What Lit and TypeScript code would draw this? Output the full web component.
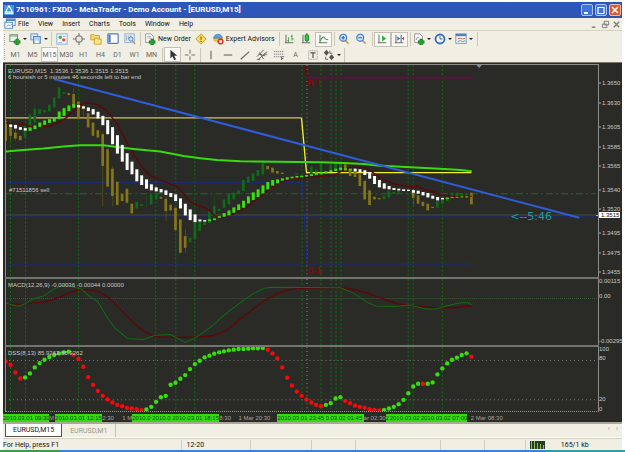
import { LitElement, html, svg, css } from "lit";
import { customElement, property } from "lit/decorators.js";

/* Plot geometry: three plot units per screen pixel at the default size. */
const LEFT = 18;
const RIGHT = 1791;
const WIDTH = RIGHT - LEFT;
const MAIN = { top: 198, bottom: 831 };
const MACD = { top: 837, bottom: 1035 };
const DSS = { top: 1041, bottom: 1233 };
const barX = (i: number) => 17 + i * 14.53;
const SIGNALS = [31, 77, 235, 467, 526, 583, 904, 961, 991, 1006, 1021, 1222, 1237, 1324];
const SESSION = 919;
/* Centre of the screen pixel that holds a plot unit, so hairlines stay sharp. */
const snap = (v: number) => Math.floor(v / 3) * 3 + 1.5;

type Bar = [number, number, number, string];

/* Bars: index, top, bottom, kind. */
const smooth: Bar[] = [
  [1, 376, 383, "w"], [2, 377, 388, "w"], [3, 384, 392, "w"], [4, 387, 394, "w"], [5, 385, 395, "g"],
  [6, 379, 390, "g"], [7, 370, 383, "g"], [8, 364, 377, "g"], [9, 360, 371, "g"], [10, 356, 367, "g"],
  [11, 337, 360, "g"], [12, 327, 350, "g"], [13, 319, 336, "g"], [14, 315, 326, "g"], [15, 318, 325, "w"],
  [16, 322, 328, "w"], [17, 325, 336, "w"], [18, 330, 346, "w"], [19, 338, 358, "w"], [20, 350, 378, "w"],
  [21, 363, 405, "w"], [22, 384, 435, "w"], [23, 408, 463, "w"], [24, 437, 487, "w"], [25, 462, 512, "w"],
  [26, 487, 525, "w"], [27, 510, 546, "w"], [28, 528, 557, "w"], [29, 540, 568, "w"], [30, 555, 573, "w"],
  [31, 564, 576, "w"], [32, 569, 579, "w"], [33, 573, 587, "w"], [34, 581, 593, "w"], [35, 585, 605, "w"],
  [36, 597, 627, "w"], [37, 613, 648, "w"], [38, 630, 662, "w"], [39, 645, 668, "w"], [40, 660, 666, "w"],
  [41, 662, 666, "w"], [42, 660, 665, "g"], [43, 657, 662, "g"], [44, 650, 655, "g"], [45, 641, 652, "g"],
  [46, 633, 648, "g"], [47, 624, 640, "g"], [48, 615, 632, "g"], [49, 604, 625, "g"], [50, 591, 612, "g"],
  [51, 579, 602, "g"], [52, 570, 593, "g"], [53, 558, 582, "g"], [54, 548, 570, "g"], [55, 542, 559, "g"],
  [56, 540, 552, "g"], [57, 537, 544, "g"], [58, 534, 541, "g"], [59, 532, 537, "g"], [60, 530, 535, "g"],
  [61, 529, 534, "g"], [62, 527, 532, "g"], [63, 525, 530, "g"], [64, 520, 527, "g"], [65, 518, 525, "g"],
  [66, 516, 523, "g"], [67, 512, 518, "g"], [68, 508, 515, "g"], [69, 505, 513, "g"], [70, 507, 512, "g"],
  [71, 508, 514, "g"], [72, 508, 516, "w"], [73, 510, 518, "w"], [74, 513, 527, "w"], [75, 518, 538, "w"],
  [76, 530, 554, "w"], [77, 542, 564, "w"], [78, 552, 568, "w"], [79, 560, 570, "w"], [80, 566, 572, "w"],
  [81, 568, 573, "w"], [82, 570, 575, "w"], [83, 571, 575, "w"], [84, 572, 580, "w"], [85, 574, 583, "w"],
  [86, 578, 588, "w"], [87, 581, 594, "w"], [88, 589, 598, "w"], [89, 593, 603, "w"], [90, 596, 600, "w"],
  [91, 595, 599, "g"], [92, 593, 596, "g"], [93, 592, 595, "g"], [94, 591, 594, "g"], [95, 591, 594, "g"],
];

const prices: Bar[] = [
  [0, 365, 425, "o"], [1, 380, 410, "o"], [2, 400, 418, "o"], [3, 410, 423, "o"], [4, 375, 415, "u"],
  [5, 346, 390, "u"], [6, 330, 370, "u"], [7, 330, 345, "u"], [8, 333, 340, "u"], [9, 317, 337, "u"],
  [10, 295, 325, "u"], [11, 265, 298, "u"], [12, 279, 284, "u"], [13, 282, 288, "o"], [14, 285, 320, "o"],
  [15, 307, 360, "o"], [16, 320, 330, "o"], [17, 342, 385, "o"], [18, 370, 410, "o"], [19, 393, 415, "o"],
  [20, 405, 500, "o"], [21, 450, 562, "o"], [22, 508, 590, "o"], [23, 547, 617, "o"], [24, 583, 605, "o"],
  [25, 568, 610, "o"], [26, 613, 642, "o"], [27, 608, 627, "u"], [28, 614, 620, "u"], [30, 585, 615, "u"],
  [31, 580, 600, "u"], [32, 592, 598, "o"], [33, 598, 635, "o"], [34, 616, 633, "o"], [35, 625, 692, "o"],
  [36, 660, 760, "o"], [37, 710, 745, "o"], [38, 715, 728, "u"], [39, 668, 720, "u"], [40, 668, 695, "u"],
  [41, 665, 677, "u"], [42, 635, 670, "u"], [43, 620, 650, "u"], [44, 628, 635, "u"], [45, 600, 625, "u"],
  [46, 582, 615, "u"], [47, 580, 600, "u"], [48, 573, 585, "u"], [49, 542, 575, "u"], [50, 532, 550, "u"],
  [51, 522, 545, "u"], [52, 512, 530, "u"], [53, 492, 525, "u"], [54, 500, 510, "o"], [55, 505, 520, "o"],
  [56, 515, 523, "o"], [57, 520, 524, "o"], [60, 522, 526, "u"], [63, 502, 525, "u"], [64, 510, 520, "u"],
  [65, 492, 520, "u"], [67, 495, 510, "u"], [68, 490, 510, "u"], [69, 492, 510, "u"], [70, 495, 515, "o"],
  [71, 508, 530, "o"], [72, 515, 533, "o"], [73, 525, 560, "o"], [74, 545, 600, "o"], [75, 573, 617, "o"],
  [76, 592, 600, "o"], [77, 596, 600, "o"], [78, 588, 600, "u"], [79, 575, 595, "u"], [80, 578, 584, "u"],
  [81, 573, 580, "u"], [84, 577, 595, "o"], [85, 588, 613, "o"], [86, 607, 620, "o"], [87, 613, 633, "o"],
  [88, 622, 626, "o"], [89, 605, 625, "u"], [90, 592, 613, "u"], [91, 592, 605, "u"], [92, 580, 592, "u"],
  [93, 580, 590, "u"], [94, 584, 592, "u"], [95, 584, 592, "u"], [96, 580, 615, "o"],
];

/* Wicks: x, top, bottom, colour class. */
const wicks: [number, number, number, string][] = [
  [31, 374, 425, "o"], [46, 380, 425, "o"], [103, 318, 385, "u"], [220, 268, 330, "o"], [249, 318, 360, "o"],
  [307, 400, 620, "o"], [337, 500, 620, "o"], [438, 590, 622, "u"], [497, 590, 665, "o"], [526, 600, 780, "u"],
  [555, 690, 760, "o"], [642, 585, 660, "u"], [788, 480, 530, "u"], [1093, 540, 602, "o"], [1238, 570, 620, "o"],
];

const slowAverage =
  "15,457 60,453 130,448 190,442 240,438 310,438 350,443 400,449 480,457 550,470 600,477 650,482 720,486 960,489 1030,491 1090,494 1130,499 1230,504 1330,509 1380,512 1413,516";
const fastAverage =
  "15,371 70,376 100,385 150,380 180,368 200,355 215,340 235,320 260,311 290,316 320,335 350,373 375,420 400,465 430,510 450,528 480,542 530,562 570,608 600,620 620,628 645,650 665,655 700,644 740,622 780,592 820,560 850,545 890,536 960,532 1000,528 1030,512 1060,503 1095,505 1120,522 1150,542 1180,554 1220,561 1250,562 1280,572 1320,586 1360,592 1413,590";
const macdLine =
  "17,909 55,919 80,909 97,897 130,888 160,868 180,859 200,855 220,861 245,868 265,887 293,905 320,950 345,985 383,1015 430,1018 465,1005 510,1003 555,1027 585,1013 630,982 660,955 690,930 730,900 760,880 790,865 815,862 1020,863 1060,880 1100,907 1125,918 1185,919 1225,915 1250,921 1275,927 1305,927 1340,917 1375,909 1405,907 1412,915";
const macdSignal =
  "17,911 60,912 90,910 120,907 150,901 180,891 210,877 235,870 270,869 293,873 320,888 350,917 380,948 410,977 430,992 455,1006 480,1011 590,1011 640,1006 675,993 710,965 740,940 770,918 800,897 830,881 860,870 890,865 1020,863 1050,867 1080,873 1110,883 1150,897 1190,911 1220,915 1240,918 1300,923 1360,923 1412,917";

const dss = [
  259, 269, 292, 310, 307, 295, 277, 264, 254, 246, 240, 235, 232, 230, 239, 252, 275, 306, 329, 347, 362, 373,
  382, 389, 393, 398, 400, 402, 405, 403, 395, 380, 366, 362, 329, 323, 311, 300, 282, 267, 257, 247, 242, 236,
  232, 229, 226, 224, 222, 222, 221, 220, 220, 219, 224, 235, 250, 277, 308, 331, 349, 362, 373, 382, 389, 393,
  389, 384, 370, 366, 377, 384, 391, 395, 398, 402, 404, 406, 404, 400, 395, 387, 374, 354, 334, 326, 326, 326,
  322, 298, 280, 265, 254, 248, 240, 235, 245,
];
const falling = (i: number) =>
  i < 4 || (i > 13 && i < 29) || (i > 53 && i < 66) || (i > 69 && i < 78) || i === 86 || i === 96;

const verticals = (p: { top: number; bottom: number }) => svg`
  ${SIGNALS.map((x) => svg`<line class="signal" x1=${snap(x)} x2=${snap(x)} y1=${p.top} y2=${p.bottom} />`)}
  <line class="session" x1=${snap(SESSION)} x2=${snap(SESSION)} y1=${p.top} y2=${p.bottom} />`;

const across = (cls: string, x1: number, x2: number, y: number) =>
  svg`<line class=${cls} x1=${x1} x2=${x2} y1=${snap(y)} y2=${snap(y)} />`;

@customElement("chart-pane")
class ChartPane extends LitElement {
  @property() kind = "main";

  static styles = css`
    :host { display: block; position: relative; min-height: 0; overflow: hidden; }
    svg { display: block; position: absolute; inset: 0; width: 100%; height: 100%; }
    line, polyline { fill: none; }
    .signal { stroke: #07750d; stroke-width: 3; stroke-dasharray: 6 6; }
    .session { stroke: #8a8a86; stroke-width: 3; stroke-dasharray: 3 9; }
    .grid { stroke: #777773; stroke-width: 3; stroke-dasharray: 3 9; }
    .zero { stroke: #3c5a3a; stroke-width: 3; stroke-dasharray: 3 3; }
    .level { stroke: #182b88; stroke-width: 3; }
    .bid { stroke: #454b38; stroke-width: 3; }
    .position { stroke: #0b7a12; stroke-width: 3; stroke-dasharray: 21 9 6 9; }
    .pivot { stroke: #d8c25c; stroke-width: 4; }
    .pivot.today { stroke: #f4ee34; }
    .resist { stroke: #6a0848; stroke-width: 5; }
    .step { stroke: #6c0a0e; stroke-width: 6; }
    .slow { stroke: #37dc0c; stroke-width: 6; }
    .fast { stroke: #5e0708; stroke-width: 4; }
    .thin { stroke: #0f6d12; stroke-width: 3; }
    .trend { stroke: #2f5cd8; stroke-width: 6; }
    .w { fill: #ffffff; }
    .g { fill: #3be010; }
    .o { fill: #85761a; }
    .u { fill: #0e6c18; }
    .wick { opacity: 0.4; }
    .up { fill: #36df0a; }
    .down { fill: #f80808; }
    .marker { fill: #7a8fc4; }
  `;

  private main() {
    return svg`
      ${verticals(MAIN)}
      ${across("level", 15, 905, 550)}
      ${across("level", 15, 905, 796)}
      <polyline class="level" points="905,550 920,793 1412,793" />
      ${across("level", 15, 1791, 648)}
      ${across("bid", 15, 1791, 645)}
      ${across("position", 15, 1785, 583)}
      <polyline class="pivot" points="15,356 903,356" />
      <polyline class="pivot today" points="903,356 918,520 1412,520" />
      <polyline class="step" points="913,198 920,236" />
      <line class="resist" x1="920" x2="1415" y1="236" y2="236" />
      ${wicks.map(([x, t, b, k]) => svg`<rect class="wick ${k}" x=${x - 1} y=${t} width="3" height=${b - t} />`)}
      ${prices.map(([i, t, b, k]) => svg`<rect class=${k} x=${barX(i) - 4} y=${t} width="8" height=${b - t} />`)}
      <polyline class="fast" points=${fastAverage} />
      <polyline class="slow" points=${slowAverage} />
      ${smooth.map(([i, t, b, k]) => svg`<rect class=${k} x=${barX(i) - 4} y=${t} width="9" height=${b - t} />`)}
      <line class="trend" x1="162" y1="240" x2="1735" y2="655" />
      <polygon class="marker" points="1427,198 1443,198 1435,207" />`;
  }

  private macd() {
    return svg`
      ${verticals(MACD)}
      ${across("zero", 15, 1791, 895)}
      <polyline class="fast" points=${macdSignal} />
      <polyline class="thin" points=${macdLine} />`;
  }

  private dss() {
    return svg`
      ${verticals(DSS)}
      ${across("grid", 15, 1791, 1082)}
      ${across("grid", 15, 1791, 1198)}
      ${dss.map((y, i) => svg`<circle class=${falling(i) ? "down" : "up"} cx=${barX(i)} cy=${y + 825} r="6.500" />`)}`;
  }

  render() {
    const box = this.kind === "main" ? MAIN : this.kind === "macd" ? MACD : DSS;
    const body = this.kind === "main" ? this.main() : this.kind === "macd" ? this.macd() : this.dss();
    return html`<svg viewBox="${LEFT} ${box.top} ${WIDTH} ${box.bottom - box.top}" preserveAspectRatio="none"
      role="img" aria-label="${this.kind} plot">${body}</svg><slot></slot>`;
  }
}

/* Toolbar glyphs, drawn on a 14 x 14 grid. */
const plus = svg`<path d="M8 7h3v2h2v3h-2v2h-3v-2h-2v-3h2z" fill="#21a32c" stroke="#0c6a18" stroke-width=".6"/>`;
const axes = svg`<path d="M3.500 2v10M2 11.500h10" stroke="#6d6d69" stroke-width="1.200" fill="none"/>`;
const lens = (mark: string) => svg`
  <path d="M8.500 8.500l4 4" stroke="#c9a24a" stroke-width="2"/>
  <circle cx="6" cy="5.500" r="4" fill="#cfe4f8" stroke="#3f74bd" stroke-width="1.300"/>
  <path d=${mark} stroke="#2a5fae" stroke-width="1.300"/>`;

const icons: Record<string, unknown> = {
  app: svg`<rect width="14" height="14" fill="#3f9be0"/><path d="M7 1l5 9H2z" fill="none" stroke="#fff" stroke-width="1.500"/><path d="M1 12h12" stroke="#fff" stroke-width="1.500"/>`,
  doc: svg`<rect x="3" y="1" width="10" height="8" fill="#fff" stroke="#4a80c4"/><path d="M3 2.500h10" stroke="#4a80c4" stroke-width="2"/><rect x="1" y="5" width="9" height="7" fill="#fff" stroke="#4a80c4"/><path d="M3 10l2-2 2 1 2-2" fill="none" stroke="#3d9be0"/>`,
  newChart: svg`<rect x="1" y="2" width="9" height="8" fill="#e8f3e6" stroke="#5d8f68"/><path d="M1 3.500h9" stroke="#5d8f68"/>${plus}`,
  profiles: svg`<rect x="1" y="1" width="8" height="7" fill="#dbe9fa" stroke="#5b8bc8"/><rect x="4" y="4" width="8" height="8" fill="#b4d0f0" stroke="#4577b8"/><rect x="6" y="9" width="4" height="3" fill="#fff"/>`,
  watch: svg`<rect x="1" y="1" width="12" height="12" fill="#f4faff" stroke="#7fa6d2"/><circle cx="5" cy="5" r="2" fill="#37b14a"/><circle cx="9" cy="8" r="2" fill="#e2492f"/><path d="M3 11h4M8 4h3" stroke="#7fa6d2"/>`,
  data: svg`<circle cx="7" cy="7" r="3.800" fill="#e9e7dc" stroke="#777" stroke-width="1.300"/><path d="M7 0v4M7 10v4M0 7h4M10 7h4" stroke="#777" stroke-width="1.300"/>`,
  navigator: svg`<path d="M1 2h4l1 1h5v5H1z" fill="#f7dc6c" stroke="#c89a22"/><path d="M5 6h3l1 1h4v6H5z" fill="#fbe88c" stroke="#c89a22"/>`,
  terminal: svg`<rect x="1" y="1" width="12" height="11" rx="1" fill="#fff" stroke="#4a7ec4" stroke-width="1.400"/><path d="M3 2v9" stroke="#4a7ec4" stroke-width="2.500"/>`,
  tester: svg`<rect x="1" y="1" width="11" height="10" fill="#e6eef6" stroke="#8ca6c6"/><path d="M3 3v6M5 3v4M8 2v4" stroke="#8ca6c6"/><circle cx="8" cy="7" r="2.500" fill="#cfe4f8" stroke="#3f74bd"/><path d="M10 9l3 4" stroke="#c9a24a" stroke-width="1.800"/>`,
  order: svg`<path d="M2 1h6l3 3v7H2z" fill="#fff" stroke="#888"/><path d="M4 4h4M4 6h5" stroke="#999"/>${plus}`,
  editor: svg`<path d="M7 1l6 6-6 6-6-6z" fill="#f8d866" stroke="#c8921c"/><path d="M7 4v4M7 9v1.500" stroke="#9c6a10" stroke-width="1.500"/>`,
  advisor: svg`<ellipse cx="7" cy="7" rx="6" ry="4" fill="#f0c14a"/><path d="M2 6c0-6 10-6 10 0z" fill="#5aa2dc" stroke="#3575b4" stroke-width=".7"/><circle cx="10" cy="10" r="3.500" fill="#dc2c1c"/><rect x="8.500" y="8.500" width="3" height="3" fill="#fff"/>`,
  bars: svg`${axes}<path d="M6.500 5v6M5 9h1.500M10.500 2v7M9 4h1.500M10.500 7h2" stroke="#2b9c36" fill="none"/>`,
  candles: svg`${axes}<path d="M8 0v11" stroke="#167a22"/><rect x="6" y="2" width="4" height="7" rx="1" fill="#2ecb3a" stroke="#167a22"/>`,
  line: svg`${axes}<path d="M4 9c2-5 4-5 5-3s2 2 4 2" stroke="#2b9c36" stroke-width="1.200" fill="none"/>`,
  zoomIn: lens("M4 5.500h4M6 3.500v4"),
  zoomOut: lens("M4 5.500h4"),
  scroll: svg`${axes}<path d="M7 3l5 3.500-5 3.500z" fill="#2bb53a"/>`,
  shift: svg`${axes}<path d="M9.500 2v9" stroke="#3f74bd" stroke-width="1.300"/><path d="M8.500 6.500L5 4v5z" fill="#3f74bd"/><path d="M10 6.500l3-2v4z" fill="#d0402c"/>`,
  indicator: svg`<path d="M2 1h6l3 3v7H2z" fill="#fff" stroke="#888"/><path d="M4 8c1-4 2-4 3-2" stroke="#777" fill="none"/>${plus}`,
  clock: svg`<circle cx="7" cy="7" r="5.200" fill="#fff" stroke="#2f6fc4" stroke-width="2.200"/><path d="M7 3.500V7h3" stroke="#444" fill="none"/>`,
  template: svg`<rect x="1" y="1" width="12" height="11" fill="#fff" stroke="#5b8bc8"/><path d="M1 2.500h12" stroke="#4a7ec4" stroke-width="2.500"/><path d="M3 7l3-1 3 1 3-1" stroke="#c84030" fill="none"/><path d="M3 10l3-1 3 1 3-1" stroke="#2b9c36" fill="none"/>`,
  cursor: svg`<path d="M4 1v10l2.500-2.500L8.500 13l2-1-2-4H12z" fill="#333"/>`,
  cross: svg`<path d="M7 1v4.500M7 8.500V13M1 7h4.500M8.500 7H13" stroke="#777" stroke-width="1.200"/>`,
  vline: svg`<path d="M7 2v10" stroke="#666" stroke-width="1.300"/>`,
  hline: svg`<path d="M2 7h10" stroke="#666" stroke-width="1.300"/>`,
  slope: svg`<path d="M2 12L12 3" stroke="#666" stroke-width="1.300"/>`,
  channel: svg`<path d="M1 9L9 1M3 12L13 3M3 6l8 2M4 4l5 8M1 12h4M9 6h4" stroke="#555" fill="none"/>`,
  fibo: svg`<path d="M1 3h12M1 6h12M1 9h9" stroke="#777" stroke-dasharray="1.500 .800"/><path d="M10 13V9h3M10 11h2" stroke="#555" fill="none"/>`,
  label: svg`<rect x="2" y="2" width="10" height="10" fill="none" stroke="#888" stroke-dasharray="1 1"/><path d="M4 4.500h6M7 4.500v6" stroke="#555" stroke-width="1.400"/>`,
  arrows: svg`<path d="M4 1l3 3.500-3 3.500-3-3.500zM10 6l3 3.500-3 3.500-3-3.500z" fill="#555"/><path d="M8 2v3h3M3 9v3h3" stroke="#555" fill="none"/>`,
};

const icon = (name: string) =>
  html`<svg class="icon" viewBox="0 0 14 14" aria-hidden="true">${icons[name]}</svg>`;

type Tool = { name: string; id?: string; text?: string; menu?: boolean; on?: boolean };
const sep = null;

const standard: (Tool | null)[] = [
  { name: "New chart", id: "newChart", menu: true },
  { name: "Profiles", id: "profiles", menu: true },
  sep,
  { name: "Market Watch", id: "watch" },
  { name: "Data Window", id: "data" },
  { name: "Navigator", id: "navigator" },
  { name: "Terminal", id: "terminal" },
  { name: "Strategy Tester", id: "tester" },
  sep,
  { name: "New Order", id: "order", text: "New Order" },
  { name: "MetaEditor", id: "editor" },
  { name: "Expert Advisors", id: "advisor", text: "Expert Advisors" },
  sep,
  { name: "Bar chart", id: "bars" },
  { name: "Candlesticks", id: "candles" },
  { name: "Line chart", id: "line", on: true },
  sep,
  { name: "Zoom in", id: "zoomIn" },
  { name: "Zoom out", id: "zoomOut" },
  sep,
  { name: "Auto scroll", id: "scroll", on: true },
  { name: "Chart shift", id: "shift", on: true },
  sep,
  { name: "Indicators", id: "indicator", menu: true },
  { name: "Periods", id: "clock", menu: true },
  { name: "Templates", id: "template", menu: true },
  sep,
];

const drawing: (Tool | null)[] = [
  ...["M1", "M5", "M15", "M30", "H1", "H4", "D1", "W1", "MN"].map((t) => ({ name: t, text: t, on: t === "M15" })),
  sep,
  { name: "Cursor", id: "cursor", on: true },
  { name: "Crosshair", id: "cross" },
  sep,
  { name: "Vertical line", id: "vline" },
  { name: "Horizontal line", id: "hline" },
  { name: "Trendline", id: "slope" },
  { name: "Channel", id: "channel" },
  { name: "Fibonacci", id: "fibo" },
  { name: "Text", text: "A" },
  { name: "Text label", id: "label" },
  { name: "Arrows", id: "arrows", menu: true },
  sep,
];

const pct = (v: number, from: number, to: number) => `${((v - from) / (to - from)) * 100}%`;

const priceScale: [string, number][] = [
  ["1.3650", 256], ["1.3630", 315], ["1.3605", 385], ["1.3585", 444], ["1.3565", 502], ["1.3540", 573],
  ["1.3520", 629], ["1.3495", 702], ["1.3475", 760], ["1.3455", 818],
];

/* Time scale, left to right: text, share of the width, signal flag. */
const timeScale: [string, number, boolean][] = [
  ["2010.03.01 09:30", 46, true], ["M", 6, false], ["2010.03.01 12:15", 47, true], ["2:30", 20, false],
  ["1 M", 10, false], ["2010.0", 20, true], ["2010.0", 20, true], ["2010.03.01 18:15", 47, true],
  ["8:30", 19, false], ["1 Mar 20:30", 39, false], ["2010.03.01 23:45", 48, true], ["0.03.02 01:45", 38, true],
  ["ar 02:30", 22, false], ["2", 4, true], ["2010.03.02", 31, true], ["2010.03.02 07:00", 46, true],
  ["", 4, false], ["2 Mar 08:30", 151, false],
];

@customElement("app-root")
class AppRoot extends LitElement {
  static styles = css`
    :host {
      display: flex; flex-direction: column; box-sizing: border-box; min-height: 100vh;
      padding-top: 2px; background: #fff; color: #111;
      font: 7px/10px Roboto, "Liberation Sans", sans-serif;
    }
    button { font: inherit; color: inherit; background: none; border: 0; padding: 0; margin: 0; }
    .window { flex: 1; display: flex; flex-direction: column; margin: 0 3px; background: #f1efe4; }
    .icon { display: block; width: 12px; height: 12px; flex: none; }

    .title { display: flex; align-items: center; gap: 2px; height: 16px; padding: 0 1px; background: linear-gradient(#2a58bd, #3154b2); color: #fff; }
    .title .icon { width: 10px; height: 10px; }
    h1 { flex: 1; margin: 0; font: bold 8px/16px Roboto, "Open Sans", sans-serif; white-space: nowrap; }
    .caption { width: 12px; height: 12px; border: 1px solid #a9c2ee; border-radius: 2px; background: #3f74dc; }
    .caption.close { background: #e2562c; border-color: #f0c0ac; }
    .caption svg, .mdi svg { display: block; width: 100%; height: 100%; }

    .menu { display: flex; align-items: center; height: 12px; border-bottom: 1px solid #d5d2c2; padding: 0 1px; }
    .menu nav { display: flex; gap: 9px; flex: 1; padding-left: 2px; }
    .mdi { display: flex; gap: 2px; color: #777; }
    .mdi button { width: 9px; height: 9px; }

    .bar { display: flex; align-items: center; height: 16px; box-sizing: border-box; }
    .bar.second { height: 15px; }
    .grip { width: 1px; height: 11px; margin: 0 1px; border-left: 1px dotted #a9a696; }
    .rule { width: 1px; height: 14px; margin: 0 1px 0 2px; background: #cbc8b8; }
    .tool { display: flex; align-items: center; justify-content: center; gap: 2px; width: 17px; height: 15px; flex: none; box-sizing: border-box; white-space: nowrap; }
    .tool.menu-tool { width: 21px; padding: 0; border: 0; }
    .tool.wide { width: auto; padding: 0 2px; }
    .tool.on { border: 1px solid #c4c1b2; background: #faf9f5; }
    .tool.period { color: #666; }
    .caret { border: 2px solid transparent; border-top-color: #222; border-bottom: 0; }

    .chart {
      flex: 1; display: grid; grid-template-columns: minmax(0, 1fr) 23px;
      grid-template-rows: 212fr 68fr 67fr 10px;
      padding: 1px 0 0 2px; border-top: 1px solid #77756c; border-bottom: 2px solid #aaa79b;
      background: #2a2a27; color: #c9c9c5;
      font: 6px/7px "Liberation Sans", Arial, sans-serif;
    }
    chart-pane { border: solid #8c8c88; border-width: 1px 1px 0 1px; }
    chart-pane.lower { border-top: 2px solid #737370; }
    chart-pane.last { border-bottom: 1px dotted #999; }
    .axis { position: relative; }
    .mark { position: absolute; left: 3px; transform: translateY(-50%); white-space: nowrap; }
    .mark::before { content: ""; position: absolute; left: -3px; top: 3px; width: 2px; height: 1px; background: #aaa; }
    .wide-axis .mark { left: 0; }
    .wide-axis .mark::before { content: none; }
    .mark.now { left: 0; padding: 0 1px 0 2px; background: #fff; color: #111; line-height: 6px; }
    .note { position: absolute; white-space: nowrap; }
    .head { left: 2px; top: 3px; }
    .head span { display: block; line-height: 6px; }
    .sell { left: 3px; }
    .count { color: #1f9f9b; font: 11px/12px "DejaVu Sans", sans-serif; transform: translateY(-50%); }
    .pivot-name { color: #84090c; font: bold 9px/10px "Liberation Sans", sans-serif; }
    .times { display: flex; align-items: flex-end; margin-left: -2px; grid-column: 1 / -1; color: #a4a4a0; }
    .time { flex-basis: 0; min-width: 0; height: 8px; line-height: 8px; overflow: hidden; white-space: nowrap; }
    .time.hit { background: #35dc0b; color: #084f0c; }

    .tabs { display: flex; align-items: stretch; height: 13px; padding-left: 2px; border-bottom: 1px solid #fff; }
    .tab { padding: 0 8px; color: #9b988a; border-right: 1px solid #c4c1b2; }
    .tab.active { color: #111; background: #fff; border: 1px solid #55534c; border-top: 0; padding: 0 7px; }
    .arrows { margin-left: auto; display: flex; gap: 6px; padding-right: 4px; color: #999; }
    .status { display: flex; align-items: center; height: 12px; box-sizing: border-box; border-top: 1px solid #d5d2c2; }
    .status span { box-sizing: border-box; height: 10px; }
    .cell { border-left: 1px solid #cfccbc; padding-left: 4px; }
    .help { flex: 180; }
    .c1 { flex: 64; } .c2 { flex: 57; } .c3 { flex: 39; } .c4 { flex: 81; } .c5 { flex: 39; } .c6 { flex: 36; }
    .conn { display: flex; align-items: center; gap: 16px; flex: 93; }
    .conn svg { width: 15px; height: 8px; }
    .task { height: 2px; background: linear-gradient(90deg, #3f9a4c 0 60px, #3c80e0 60px calc(100% - 80px), #2fa0a0 calc(100% - 80px)); }
  `;

  private tool(t: Tool | null) {
    if (!t) return html`<i class="rule"></i>`;
    const cls = ["tool", t.on ? "on" : "", t.menu ? "menu-tool" : "", t.id && t.text ? "wide" : "", !t.id ? "period" : ""].join(" ");
    return html`<button class=${cls} aria-label=${t.name} aria-pressed=${t.on ? "true" : "false"}>
      ${t.id ? icon(t.id) : ""}${t.text ?? ""}${t.menu ? html`<i class="caret"></i>` : ""}
    </button>`;
  }

  private marks(list: [string, number][], p: { top: number; bottom: number }) {
    return list.map(([t, y]) => html`<span class="mark" style="top:${pct(y, p.top, p.bottom)}">${t}</span>`);
  }

  render() {
    const at = (x: number, y: number) => `left:${pct(x, LEFT, RIGHT)};top:${pct(y, MAIN.top, MAIN.bottom)}`;
    return html`
      <div class="window">
        <header class="title">
          ${icon("app")}
          <h1>7510961: FXDD - MetaTrader - Demo Account - [EURUSD,M15]</h1>
          <button class="caption" aria-label="Minimize"><svg viewBox="0 0 10 10"><path d="M2 8h4" stroke="#fff" stroke-width="2" /></svg></button>
          <button class="caption" aria-label="Maximize"><svg viewBox="0 0 10 10"><path d="M2 2.500h6v6H2z" stroke="#fff" stroke-width="1.200" fill="none" /></svg></button>
          <button class="caption close" aria-label="Close"><svg viewBox="0 0 10 10"><path d="M2 2l6 6M8 2l-6 6" stroke="#fff" stroke-width="1.600" /></svg></button>
        </header>

        <div class="menu">
          <svg class="icon" viewBox="0 0 14 14" aria-hidden="true">${icons.doc}</svg>
          <nav>${["File", "View", "Insert", "Charts", "Tools", "Window", "Help"].map((m) => html`<button>${m}</button>`)}</nav>
          <div class="mdi">
            <button aria-label="Minimize chart"><svg viewBox="0 0 10 10"><path d="M2 8h4" stroke="#777" stroke-width="1.500" /></svg></button>
            <button aria-label="Restore chart"><svg viewBox="0 0 10 10"><path d="M3.500 1.500h5v4h-5zM1.500 4.500h5v4h-5z" stroke="#777" fill="none" /></svg></button>
            <button aria-label="Close chart"><svg viewBox="0 0 10 10"><path d="M2 2l6 6M8 2l-6 6" stroke="#777" stroke-width="1.400" /></svg></button>
          </div>
        </div>

        <div class="bar"><i class="grip"></i>${standard.map((t) => this.tool(t))}</div>
        <div class="bar second"><i class="grip"></i>${drawing.map((t) => this.tool(t))}</div>

        <main class="chart">
          <chart-pane kind="main">
            <div class="note head"><span>EURUSD,M15&nbsp; 1.3536 1.3536 1.3515 1.3515</span><span>6 hoursish or 5 minutes 46 seconds left to bar end</span></div>
            <span class="note sell" style="top:${pct(564, MAIN.top, MAIN.bottom)}">#71511856 sell</span>
            <span class="note pivot-name" style=${at(920, 238)}>R 1</span>
            <span class="note pivot-name" style=${at(920, 795)}>S 1</span>
            <span class="note count" style=${at(1528, 652)}>&lt;--5:46</span>
          </chart-pane>
          <div class="axis">
            ${this.marks(priceScale, MAIN)}
            <span class="mark now" style="top:${pct(648, MAIN.top, MAIN.bottom)}">1.3515</span>
          </div>
          <chart-pane kind="macd" class="lower"><span class="note head">MACD(12,26,9) -0.00036 -0.00044 0.00000</span></chart-pane>
          <div class="axis wide-axis">${this.marks([["0.00115", 850], ["0.00", 894], ["-0.00295", 1024]], MACD)}</div>
          <chart-pane kind="dss" class="lower last"><span class="note head">DSS(8,13) 85.9262 85.9262</span></chart-pane>
          <div class="axis wide-axis">${this.marks([["100", 1053], ["80", 1080], ["20", 1197], ["0", 1224]], DSS)}</div>
          <div class="times">
            ${timeScale.map(([t, w, hit]) => html`<span class=${hit ? "time hit" : "time"} style="flex-grow:${w}">${t}</span>`)}
          </div>
        </main>

        <nav class="tabs">
          <button class="tab active">EURUSD,M15</button><button class="tab">EURUSD,M1</button>
          <span class="arrows"><span>‹</span><span>›</span></span>
        </nav>
        <footer class="status">
          <span class="help">For Help, press F1</span><span class="cell c1">12-20</span><span class="cell c2"></span>
          <span class="cell c3"></span><span class="cell c4"></span><span class="cell c5"></span><span class="cell c6"></span>
          <span class="cell conn">
            <svg viewBox="0 0 15 8" aria-hidden="true"><rect width="15" height="8" fill="#1d3f2c" /><path d="M1.500 0v8M4.500 0v8M7.500 2v6M10.500 3v5M13.500 4v4" stroke="#9cb83c" /></svg>
            165/1 kb
          </span>
        </footer>
      </div>
      <div class="task"></div>
    `;
  }
}
